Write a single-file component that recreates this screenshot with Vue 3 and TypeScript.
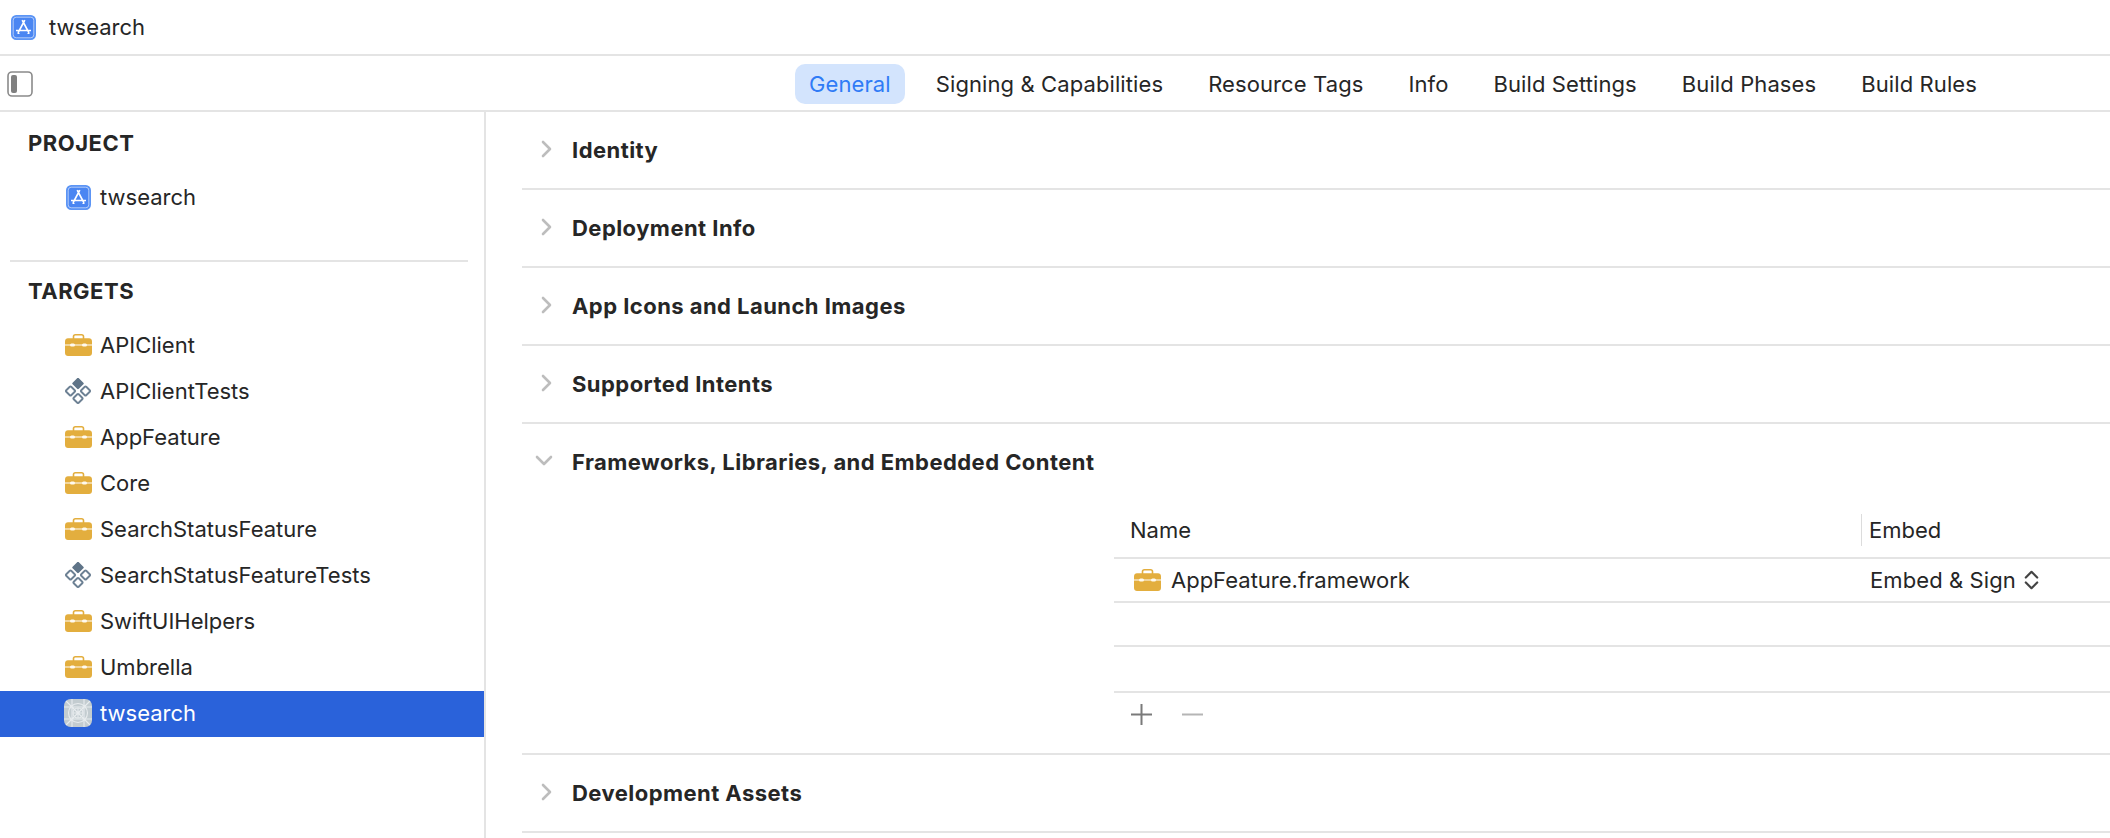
<script setup lang="ts">
type Kind = 'box' | 'test' | 'tpl'
const tabs = ['General', 'Signing & Capabilities', 'Resource Tags', 'Info', 'Build Settings', 'Build Phases', 'Build Rules']
const targets: { name: string; kind: Kind; selected?: boolean }[] = [
  { name: 'APIClient', kind: 'box' },
  { name: 'APIClientTests', kind: 'test' },
  { name: 'AppFeature', kind: 'box' },
  { name: 'Core', kind: 'box' },
  { name: 'SearchStatusFeature', kind: 'box' },
  { name: 'SearchStatusFeatureTests', kind: 'test' },
  { name: 'SwiftUIHelpers', kind: 'box' },
  { name: 'Umbrella', kind: 'box' },
  { name: 'twsearch', kind: 'tpl', selected: true },
]
const before = ['Identity', 'Deployment Info', 'App Icons and Launch Images', 'Supported Intents']
</script>

<template>
  <div class="page">
    <svg class="defs" width="0" height="0" aria-hidden="true">
      <symbol id="project" viewBox="0 0 25 25">
        <rect x="0.75" y="0.75" width="23.5" height="23.5" rx="4.5" fill="#4a86f2" stroke="#5c95f5" stroke-width="1.5" />
        <rect x="2.2" y="2.2" width="20.6" height="20.6" rx="3" fill="none" stroke="#dfe9fc" stroke-width="0.7" />
        <path d="M13.8 5.2 7 17.8M11.200 5.200 18 17.800M5 15.500h15" fill="none" stroke="#fff" stroke-width="1.700" />
        <path d="M6.500 18.500h2M16.500 18.500h2" stroke="#fff" stroke-width="1.200" />
      </symbol>
      <symbol id="box" viewBox="0 0 27 22">
        <path d="M8.500 5V2.600C8.500 1.500 9.300.8 10.400.8h6.200c1.100 0 1.900.7 1.900 1.800V5" fill="none" stroke="#e3ae3e" stroke-width="1.600" />
        <path d="M3 4.200h21c1.700 0 3 1.300 3 3v3.300H0V7.200c0-1.700 1.300-3 3-3Z" fill="#e3ae3e" />
        <path d="M0 11.500h27V19c0 1.700-1.300 3-3 3H3c-1.700 0-3-1.300-3-3Z" fill="#e3ae3e" />
        <rect x="5" y="9.400" width="5" height="3.200" rx="1.500" fill="#fffaf0" />
        <rect x="17" y="9.400" width="5" height="3.200" rx="1.500" fill="#fffaf0" />
      </symbol>
      <symbol id="test" viewBox="0 0 26 26">
        <rect x="8.600" y="1.100" width="8.800" height="8.800" rx="1.200" transform="rotate(45 13 5.500)" fill="#5f7488" />
        <g fill="none" stroke="#6d8194" stroke-width="1.900">
          <rect x="2" y="9.500" width="7" height="7" rx="1" transform="rotate(45 5.500 13)" />
          <rect x="17" y="9.500" width="7" height="7" rx="1" transform="rotate(45 20.500 13)" />
          <rect x="9.500" y="17" width="7" height="7" rx="1" transform="rotate(45 13 20.500)" />
        </g>
      </symbol>
      <symbol id="tpl" viewBox="0 0 28 28">
        <rect width="28" height="28" rx="6.500" fill="#c3ccd0" />
        <g fill="none" stroke="#e8ecee" stroke-width="1.100">
          <circle cx="14" cy="14" r="5" />
          <circle cx="14" cy="14" r="9.500" />
          <path d="M0 8h28M0 20h28M8 0v28M20 0v28M2 2l24 24M26 2 2 26M14 9v10M9 14h10" />
        </g>
      </symbol>
      <symbol id="chev" viewBox="0 0 14 20">
        <path d="M3 3l7 7-7 7" fill="none" stroke="#bdbdbd" stroke-width="2.600" stroke-linecap="round" stroke-linejoin="round" />
      </symbol>
    </svg>

    <header class="titlebar">
      <svg class="icon-project"><use href="#project" /></svg>
      <span>twsearch</span>
    </header>

    <nav class="tabbar">
      <svg class="toggle" viewBox="0 0 26 26">
        <rect x="1" y="1" width="24" height="24" rx="4" fill="none" stroke="#8a8a8a" stroke-width="1.600" />
        <rect x="4" y="4" width="6" height="18" rx="2" fill="#808080" />
      </svg>
      <div class="tabs">
        <span v-for="(t, i) in tabs" :key="t" class="tab" :class="{ active: i === 0 }">{{ t }}</span>
      </div>
    </nav>

    <div class="body">
      <aside class="sidebar">
        <h2 class="side-head project-head">PROJECT</h2>
        <div class="row project-row">
          <span class="icon-slot"><svg class="icon-project"><use href="#project" /></svg></span>
          <span>twsearch</span>
        </div>
        <div class="side-rule"></div>
        <h2 class="side-head targets-head">TARGETS</h2>
        <div v-for="t in targets" :key="t.name" class="row" :class="{ selected: t.selected }">
          <span class="icon-slot">
            <svg :class="'icon-' + t.kind"><use :href="'#' + t.kind" /></svg>
          </span>
          <span>{{ t.name }}</span>
        </div>
      </aside>

      <main class="content">
        <section v-for="s in before" :key="s" class="sec">
          <div class="sec-head">
            <svg class="chev"><use href="#chev" /></svg>
            <span>{{ s }}</span>
          </div>
        </section>

        <section class="sec">
          <div class="sec-head">
            <svg class="chev open"><use href="#chev" /></svg>
            <span>Frameworks, Libraries, and Embedded Content</span>
          </div>
          <div class="table">
            <div class="thead">
              <span class="col-name">Name</span>
              <span class="col-embed">Embed</span>
            </div>
            <div class="tr">
              <span class="col-name file">
                <svg class="icon-box"><use href="#box" /></svg>
                <span>AppFeature.framework</span>
              </span>
              <span class="embed-val">
                <span>Embed &amp; Sign</span>
                <svg class="updown" viewBox="0 0 15 22">
                  <path d="M1.800 8.500 7.500 2.800l5.700 5.700M1.800 13.500 7.500 19.200l5.700-5.700" fill="none" stroke="#444" stroke-width="2.200" stroke-linecap="round" stroke-linejoin="round" />
                </svg>
              </span>
            </div>
            <div class="tr"></div>
            <div class="tr tall"></div>
            <div class="tools">
              <svg class="tool" viewBox="0 0 23 23"><path d="M11.500 1v21M1 11.500h21" stroke="#7a7a7a" stroke-width="2" /></svg>
              <svg class="tool" viewBox="0 0 23 23"><path d="M1 11.500h21" stroke="#b5b5b5" stroke-width="2" /></svg>
            </div>
          </div>
        </section>

        <section class="sec">
          <div class="sec-head">
            <svg class="chev"><use href="#chev" /></svg>
            <span>Development Assets</span>
          </div>
        </section>
      </main>
    </div>
  </div>
</template>

<style scoped>
.page {
  width: 2110px;
  height: 838px;
  overflow: hidden;
  background: #fff;
  color: #262626;
  font-family: Inter, "Liberation Sans", sans-serif;
  font-size: 22px;
  display: flex;
  flex-direction: column;
}
.defs { position: absolute; }
.titlebar {
  height: 54px;
  flex: none;
  border-bottom: 2px solid #e4e4e4;
  display: flex;
  align-items: center;
  gap: 13px;
  padding-left: 11px;
}
.icon-project { width: 25px; height: 25px; flex: none; }
.icon-box { width: 27px; height: 22px; flex: none; }
.icon-test { width: 26px; height: 26px; }
.icon-tpl { width: 28px; height: 28px; }
.tabbar {
  height: 52px;
  padding-top: 2px;
  flex: none;
  border-bottom: 2px solid #e4e4e4;
  display: flex;
  align-items: center;
}
.toggle { width: 26px; height: 26px; margin-left: 7px; flex: none; }
.tabs {
  display: flex;
  gap: 17px;
  margin-left: 762px;
  letter-spacing: 0.1px;
}
.tab {
  height: 40px;
  line-height: 40px;
  padding: 0 14px;
  border-radius: 10px;
  white-space: nowrap;
}
.tab.active { background: #d3e4fd; color: #2f7bf6; }
.body { flex: 1; display: flex; min-height: 0; }
.sidebar {
  width: 484px;
  flex: none;
  border-right: 2px solid #e4e4e4;
}
.side-head {
  margin: 0;
  font-size: 22px;
  font-weight: 700;
  letter-spacing: 0.5px;
  line-height: 24px;
  padding-left: 28px;
}
.project-head { padding-top: 19px; }
.project-row { margin-top: 20px; }
.side-rule {
  height: 2px;
  background: #e4e4e4;
  margin: 39px 16px 0 10px;
}
.targets-head { padding-top: 17px; margin-bottom: 20px; }
.row {
  height: 46px;
  box-sizing: border-box;
  padding-bottom: 2px;
  display: flex;
  align-items: center;
  gap: 8px;
  padding-left: 64px;
  white-space: nowrap;
}
.icon-slot {
  width: 28px;
  height: 28px;
  display: flex;
  align-items: center;
  justify-content: center;
  flex: none;
}
.row.selected { background: #2a62da; color: #fff; }
.content { flex: 1; min-width: 0; padding-left: 36px; }
.sec { border-bottom: 2px solid #e4e4e4; }
.sec-head {
  height: 76px;
  display: flex;
  align-items: center;
  font-weight: 700;
  letter-spacing: 0.45px;
  white-space: nowrap;
}
.chev { width: 14px; height: 20px; margin: 0 18px 3px 18px; flex: none; }
.chev.open { transform: translateX(-3px) rotate(90deg); }
.table { margin-left: 592px; }
.thead {
  height: 59px;
  box-sizing: border-box;
  padding-top: 3px;
  display: flex;
  align-items: center;
  border-bottom: 2px solid #e4e4e4;
}
.col-name { width: 747px; padding-left: 16px; box-sizing: border-box; flex: none; }
.col-embed {
  border-left: 1px solid #dcdcdc;
  height: 32px;
  line-height: 32px;
  padding-left: 7px;
}
.tr {
  height: 42px;
  display: flex;
  align-items: center;
  border-bottom: 2px solid #e4e4e4;
}
.tr.tall { height: 44px; }
.file { display: flex; align-items: center; gap: 10px; padding-left: 20px; }
.embed-val { display: flex; align-items: center; gap: 8px; padding-left: 9px; letter-spacing: 0.1px; }
.updown { width: 15px; height: 22px; }
.tools {
  height: 60px;
  box-sizing: border-box;
  padding-bottom: 18px;
  display: flex;
  align-items: center;
  gap: 28px;
  padding-left: 16px;
}
.tool { width: 23px; height: 23px; }
</style>

<style>
html, body { margin: 0; background: #fff; }
</style>
